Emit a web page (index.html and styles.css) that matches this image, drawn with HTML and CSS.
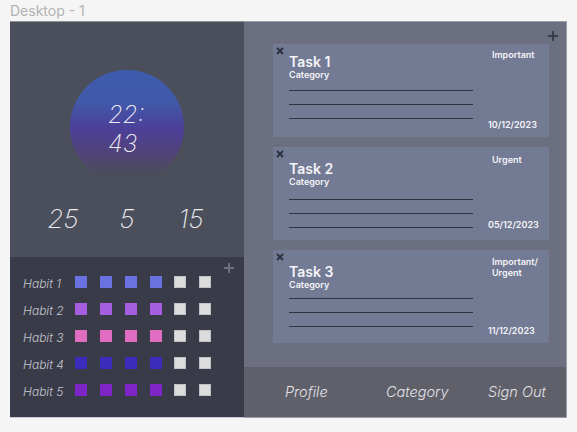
FILE: index.html
```html
<!DOCTYPE html>
<html lang="en">
<head>
<meta charset="utf-8">
<title>Desktop - 1</title>
<link rel="stylesheet" href="styles.css">
</head>
<body>
<div class="title">Desktop - 1</div>
<div class="frame">
  <div class="left">
    <section class="clock-panel">
      <div class="circle">
        <div class="time">22:<br>43</div>
      </div>
      <div class="counters">
        <span>25</span><span>5</span><span>15</span>
      </div>
    </section>
    <section class="habits-panel">
      <svg class="plus plus--habits" width="12" height="12" viewBox="0 0 12 12"><path d="M6 1V11M1 6H11" stroke="currentColor" stroke-width="2"/></svg>
      <div class="habit"><span class="habit-name">Habit 1</span><i class="sq c1"></i><i class="sq c1"></i><i class="sq c1"></i><i class="sq c1"></i><i class="sq off"></i><i class="sq off"></i></div>
      <div class="habit"><span class="habit-name">Habit 2</span><i class="sq c2"></i><i class="sq c2"></i><i class="sq c2"></i><i class="sq c2"></i><i class="sq off"></i><i class="sq off"></i></div>
      <div class="habit"><span class="habit-name">Habit 3</span><i class="sq c3"></i><i class="sq c3"></i><i class="sq c3"></i><i class="sq c3"></i><i class="sq off"></i><i class="sq off"></i></div>
      <div class="habit"><span class="habit-name">Habit 4</span><i class="sq c4"></i><i class="sq c4"></i><i class="sq c4"></i><i class="sq c4"></i><i class="sq off"></i><i class="sq off"></i></div>
      <div class="habit"><span class="habit-name">Habit 5</span><i class="sq c5"></i><i class="sq c5"></i><i class="sq c5"></i><i class="sq c5"></i><i class="sq off"></i><i class="sq off"></i></div>
    </section>
  </div>
  <div class="right">
    <section class="tasks">
      <svg class="plus plus--tasks" width="12" height="12" viewBox="0 0 12 12"><path d="M6 1V11M1 6H11" stroke="currentColor" stroke-width="2"/></svg>
      <article class="card card--first">
        <svg class="close" width="8" height="8" viewBox="0 0 8 8"><path d="M1 1L7 7M7 1L1 7" stroke="currentColor" stroke-width="1.8"/></svg>
        <div class="main">
          <div class="task-title">Task 1</div>
          <div class="task-cat">Category</div>
          <div class="lines"><hr><hr><hr></div>
        </div>
        <div class="side">
          <div class="tag">Important</div>
          <div class="date">10/12/2023</div>
        </div>
      </article>
      <article class="card card--mid">
        <svg class="close" width="8" height="8" viewBox="0 0 8 8"><path d="M1 1L7 7M7 1L1 7" stroke="currentColor" stroke-width="1.8"/></svg>
        <div class="main">
          <div class="task-title">Task 2</div>
          <div class="task-cat">Category</div>
          <div class="lines"><hr><hr><hr></div>
        </div>
        <div class="side">
          <div class="tag">Urgent</div>
          <div class="date">05/12/2023</div>
        </div>
      </article>
      <article class="card card--last">
        <svg class="close" width="8" height="8" viewBox="0 0 8 8"><path d="M1 1L7 7M7 1L1 7" stroke="currentColor" stroke-width="1.8"/></svg>
        <div class="main">
          <div class="task-title">Task 3</div>
          <div class="task-cat">Category</div>
          <div class="lines"><hr><hr><hr></div>
        </div>
        <div class="side">
          <div class="tag">Important/<br>Urgent</div>
          <div class="date">11/12/2023</div>
        </div>
      </article>
    </section>
    <nav class="nav">
      <span>Profile</span><span>Category</span><span>Sign Out</span>
    </nav>
  </div>
</div>
</body>
</html>
```
FILE: styles.css
```css
* { box-sizing: border-box; }

body {
  margin: 0;
  background: #f5f5f5;
  font-family: Inter, "Noto Sans", "Liberation Sans", sans-serif;
}

.title {
  height: 21px;
  padding: 2px 0 0 10px;
  font-size: 14px;
  line-height: 18px;
  color: #b2b2b2;
}

.frame {
  margin-left: 10px;
  width: 557px;
  height: 397px;
  display: grid;
  grid-template-columns: 234px 323px;
}

/* ---------- left column ---------- */
.left {
  display: flex;
  flex-direction: column;
}

.clock-panel {
  height: 236px;
  background: #4b4e5b;
  border-top: 1px solid #8e909a;
  display: flex;
  flex-direction: column;
  align-items: center;
  padding-top: 48px;
}

.circle {
  width: 114px;
  height: 114px;
  border-radius: 50%;
  background: linear-gradient(180deg, #3d5bae 0%, #4259aa 28%, #4c3f98 52%, #524378 74%, #4d4a64 86%, #4b4e5b 94%);
  padding: 31px 0 0 38px;
}

.time {
  font-size: 24px;
  line-height: 28.5px;
  font-weight: 200;
  font-style: italic;
  color: #ecebf4;
}

.counters {
  margin-top: 20px;
  display: grid;
  grid-template-columns: repeat(3, 64px);
  justify-items: center;
  font-size: 26px;
  line-height: 30px;
  font-weight: 200;
  font-style: italic;
  color: #e8e8ee;
}

.habits-panel {
  flex: 1;
  position: relative;
  background: #393b48;
  border-bottom: 1px solid #c9cbd2;
  padding: 19px 0 0 13px;
  display: flex;
  flex-direction: column;
  gap: 15px;
}

.habit {
  display: flex;
  align-items: flex-start;
  gap: 12.86px;
  height: 12px;
}

.habit-name {
  width: 39.14px;
  margin-top: 1.5px;
  font-size: 12px;
  line-height: 12px;
  font-style: italic;
  font-weight: 300;
  color: #c6c7cf;
  white-space: nowrap;
}

.sq {
  display: block;
  width: 12px;
  height: 12px;
  flex: none;
}
.c1 { background: #6a72e2; }
.c2 { background: #a55ee0; }
.c3 { background: #e06dc0; }
.c4 { background: #3b2cbc; }
.c5 { background: #7e25c8; }
.off { background: #dcdcdc; border: 1px solid #c2c2c6; }

.plus { position: absolute; display: block; }
.plus--habits { top: 5px; left: 213px; color: #6d707d; }
.plus--tasks { top: 8px; right: 7px; color: #393c49; }

/* ---------- right column ---------- */
.right {
  display: flex;
  flex-direction: column;
  border-top: 1px solid #9a9da8;
  border-right: 1px solid #9a9da8;
}

.tasks {
  flex: 1;
  position: relative;
  background: #6b6f80;
  padding: 22px 17px 0 29px;
  display: flex;
  flex-direction: column;
  gap: 10px;
}

.card {
  height: 93px;
  background: #737a93;
  display: flex;
  align-items: stretch;
  color: #f3f4f8;
}

.close {
  display: block;
  flex: none;
  margin: 3px 5px 0 3px;
  color: #2c2f3a;
}

.main {
  width: 184px;
  padding-top: 10px;
}

.card--mid .main,
.card--last .main { padding-top: 13.5px; }

.task-title {
  font-size: 14px;
  line-height: 15px;
  font-weight: 600;
}

.task-cat {
  font-size: 9px;
  line-height: 11px;
  font-weight: 600;
}

.lines {
  margin-top: 10px;
  display: flex;
  flex-direction: column;
  gap: 13px;
}
.card--mid .lines { margin-top: 12.5px; }
.card--last .lines { margin-top: 8.5px; }

.lines hr {
  margin: 0;
  border: 0;
  height: 1px;
  background: #2f3340;
}

.side {
  margin-left: 15px;
  display: flex;
  flex-direction: column;
  justify-content: space-between;
  padding: 5px 0 7.5px;
  font-size: 9px;
  line-height: 11px;
  font-weight: 600;
}
.card--mid .side { padding: 7px 0 10px; }
.card--last .side { padding: 6px 0 7.5px; }

.tag { padding-left: 4px; }

.nav {
  height: 51px;
  background: #5f6069;
  border-bottom: 1px solid #9a9da8;
  display: grid;
  grid-template-columns: 101px 102px auto;
  align-items: center;
  padding: 0 0 0 41px;
  font-size: 14.5px;
  line-height: 18px;
  font-style: italic;
  font-weight: 300;
  color: #e2e2e8;
}
```
